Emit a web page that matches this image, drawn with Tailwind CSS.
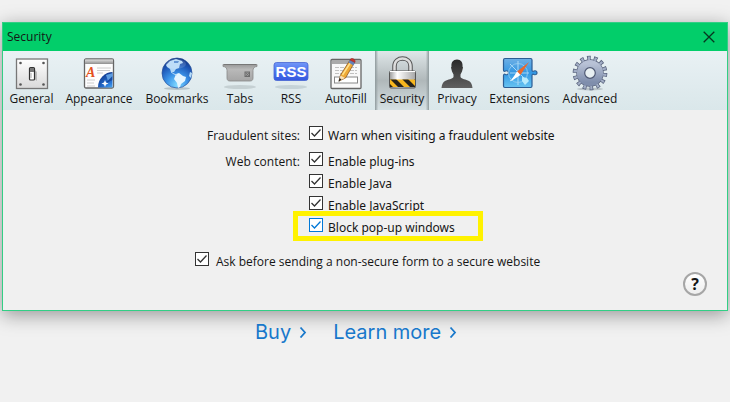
<!DOCTYPE html>
<html lang="en">
<head>
<meta charset="utf-8">
<meta name="viewport" content="width=device-width, initial-scale=1">
<title>Security</title>
<script src="https://cdn.jsdelivr.net/npm/@tailwindcss/browser@4"></script>
</head>
<body class="bg-white font-['Open_Sans','Noto_Sans',sans-serif] text-xs text-[#151515]">
<main class="bg-[#f1f1f1] px-[2px] pt-[22px] pb-14 overflow-hidden">
<section aria-label="Security preferences" class="border border-[#32cf85] bg-[#f0f0f0] shadow-[0_4px_18px_rgba(0,0,0,0.38)]">
  <header class="flex h-7 items-center justify-between bg-[#02ce6a] pl-1 pr-3 leading-4">
    <h1>Security</h1>
    <button aria-label="Close" class="size-3"><svg viewBox="0 0 12 12" class="size-3" fill="none" stroke="#07361f" stroke-width="1.3"><path d="M.7.7 11.3 11.3M11.3.7.7 11.3"/></svg></button>
  </header>
  <nav class="flex h-[59px] bg-linear-to-b from-[#e9f1f4] to-[#dae7ea] pl-px text-center">
    <button class="flex w-[55px] flex-col items-center pt-1">
      <svg class="size-9" viewBox="0 0 36 36"><defs><linearGradient id="plate" x2="0" y2="1"><stop stop-color="#fff"/><stop offset="1" stop-color="#d9d9d9"/></linearGradient></defs><rect x="2.5" y="4" width="31" height="29.5" fill="url(#plate)" stroke="#777" stroke-width="1.3"/><g fill="#555"><circle cx="6.5" cy="8" r="1.3"/><circle cx="29.5" cy="8" r="1.3"/><circle cx="6.5" cy="29.5" r="1.3"/><circle cx="29.5" cy="29.5" r="1.3"/></g><path d="m20 24 3 2v-9l-3-3z" fill="#bbb"/><rect x="15.500" y="12.500" width="5" height="12.500" rx="1" fill="#fff" stroke="#333" stroke-width="1.2"/><path d="M16 13h4v4h-4z" fill="#777"/><path d="M17 18v5" stroke="#aaa"/></svg>
      <span class="leading-4">General</span></button>
    <button class="flex w-20 flex-col items-center pt-1">
      <svg class="size-9" viewBox="0 0 36 36"><defs><radialGradient id="sea" cx=".5" cy=".7" r=".7"><stop stop-color="#6ed0ff"/><stop offset=".5" stop-color="#2877d8"/><stop offset="1" stop-color="#123b91"/></radialGradient><linearGradient id="bar" x2="0" y2="1"><stop stop-color="#ddd"/><stop offset="1" stop-color="#8e8e8e"/></linearGradient><clipPath id="win"><path d="M4 9h27.500v23.500H4z"/></clipPath></defs><rect x="3.500" y="4" width="29" height="29" rx="1.500" fill="#fdfdfd" stroke="#666" stroke-width="1.3"/><path d="M4 4.500h28V9H4z" fill="url(#bar)"/><text x="5" y="22" font-family="Liberation Serif, serif" font-size="14" font-style="italic" font-weight="700" fill="#e4511c">A</text><path d="M16 13h14M16 15.500h13M16 18h6M6 25h8M6 28h7M6 31h8" stroke="#ccc"/><g clip-path="url(#win)"><circle cx="32" cy="32" r="15" fill="url(#sea)"/><path d="m25 20 7-2v6l-5 2z" fill="#5d9ce0"/><path d="m31.500 21-8 8 8-4" fill="#164aa2"/><path d="m24 25 1 2.500 2.500 1-2.500 1-1 2.500-1-2.500-2.500-1 2.500-1z" fill="#fff"/></g></svg>
      <span class="leading-4">Appearance</span></button>
    <button class="flex w-[76px] flex-col items-center pt-1">
      <svg class="size-9" viewBox="0 0 36 36"><defs><radialGradient id="globe" cx=".5" cy=".9" r=".9"><stop stop-color="#7fd9ff"/><stop offset=".4" stop-color="#3b93e8"/><stop offset=".75" stop-color="#1d55b5"/><stop offset="1" stop-color="#12337f"/></radialGradient></defs><ellipse cx="18" cy="33.500" rx="13" ry="1.500" fill="#b7c4c9"/><circle cx="18" cy="18" r="15" fill="url(#globe)" stroke="#2a529a" stroke-width=".7"/><path d="m7 10 4-4 6-2 6 2 1 2-3 1-1 4-3 1-2 3-3 0-1-3-3-2z" fill="#b3d8f7"/><path d="m17 19 3-1 4 3 3 1-1 4-4 3-1 3-2 1-1-5-3-4z" fill="#e4f5ff"/><path d="m31 17 2 1-1 5-2-2z" fill="#b4dcf9"/><path d="M15 6h5l-1 2h-4z" fill="#4d86cf"/><path d="m12 17 3 2 3 1" fill="none" stroke="#b3d8f7"/><ellipse cx="17" cy="9" rx="10" ry="5" fill="#fff" opacity=".15"/></svg>
      <span class="leading-4">Bookmarks</span></button>
    <button class="flex w-[50px] flex-col items-center pt-1">
      <svg class="size-9" viewBox="0 0 36 36"><defs><linearGradient id="tab" x2="0" y2="1"><stop stop-color="#999"/><stop offset=".3" stop-color="#b9b9b9"/><stop offset="1" stop-color="#a5a5a5"/></linearGradient></defs><ellipse cx="18" cy="32" rx="16" ry="2" fill="#c5d0d3"/><path d="M1 9.500h34v2c-3 0-4 2-4 4V23c0 2-1 3-3 3H8c-2 0-3-1-3-3v-7.500c0-2-1-4-4-4z" fill="url(#tab)" stroke="#888" stroke-width=".8"/><path d="M2 9.500h32" stroke="#777"/><rect x="23" y="17" width="4.500" height="4.500" fill="#999" stroke="#6c6c6c"/><path d="m24 18 3 3m0-3-3 3" stroke="#666" stroke-width=".7"/></svg>
      <span class="leading-4">Tabs</span></button>
    <button class="flex w-[52px] flex-col items-center pt-1">
      <svg class="size-9" viewBox="0 0 36 36"><defs><linearGradient id="feed" x2="0" y2="1"><stop stop-color="#7197f7"/><stop offset=".5" stop-color="#4c73ee"/><stop offset="1" stop-color="#3457de"/></linearGradient></defs><ellipse cx="18" cy="32" rx="16" ry="2" fill="#c5d3d8"/><rect x="1" y="7.500" width="34" height="18" rx="2.500" fill="url(#feed)" stroke="#4665d2" stroke-width=".8"/><text x="18" y="22" text-anchor="middle" font-family="Liberation Sans, sans-serif" font-size="15" font-weight="700" fill="#fff">RSS</text></svg>
      <span class="leading-4">RSS</span></button>
    <button class="flex w-[58px] flex-col items-center pt-1">
      <svg class="size-9" viewBox="0 0 36 36"><rect x="3" y="4.500" width="30" height="29" rx="1" fill="#f8f8f8" stroke="#666" stroke-width="1.300"/><path d="M4 5h28v4H4z" fill="#aaa"/><path d="M7 12.500h22M7 15.500h8m7 0h7M7 18.500h8m7 0h7" stroke="#c1c1c1" stroke-dasharray="4 1"/><rect x="6.500" y="22" width="23" height="6" fill="#fff" stroke="#888"/><path d="m11 26 1.500-6L22 5l4.500 2.500-9 15.500z" fill="#eea936" stroke="#8a5724" stroke-width=".8"/><path d="m14.500 20 9-14" stroke="#ffe08a" stroke-width="1.500"/><path d="m20.500 7.500 1.500-3 5 3-1.500 3z" fill="#6581b9"/><path d="M22 5c1-3 6-1 5 2.500z" fill="#c9342d" stroke="#8c211d" stroke-width=".5"/><path d="m11 26 1.500-5.500 4.500 2.500z" fill="#f8dfb8"/><path d="m10.500 27 1-4 2 1.500z" fill="#222"/></svg>
      <span class="leading-4">AutoFill</span></button>
    <button aria-current="page" class="flex w-[54px] flex-col items-center bg-[linear-gradient(90deg,#8f9a9d,transparent_6%,transparent_94%,#8f9a9d),linear-gradient(#dfe7e9,#b0b8ba_50%,#d5e0e3)] pt-1">
      <svg class="size-9" viewBox="0 0 36 36"><defs><linearGradient id="steel"><stop stop-color="#999"/><stop offset=".3" stop-color="#fff"/><stop offset="1" stop-color="#a7a7a7"/></linearGradient><clipPath id="haz"><path d="M6 24.500h25v7.500H6z"/></clipPath></defs><path d="M10.500 18v-7c0-10 16-10 16 0v7" fill="none" stroke="#555" stroke-width="4.500"/><path d="M10.500 18v-7c0-10 16-10 16 0v7" fill="none" stroke="#ddd" stroke-width="2.500"/><rect x="5.500" y="16" width="26" height="17" rx="1.500" fill="url(#steel)" stroke="#555"/><g clip-path="url(#haz)"><path d="M6 24h25v8H6z" fill="#f8b61d"/><path d="m6 24 6 0 8 8h-6zm12 0h6l8 8h-6zM6 29v3h3zm24-5h6v6z" fill="#272219"/></g><path d="M6 16.500h25" stroke="#fff"/></svg>
      <span class="leading-4">Security</span></button>
    <button class="flex w-14 flex-col items-center pt-1">
      <svg class="size-9" viewBox="0 0 36 36"><defs><linearGradient id="person" x2="0" y2="1"><stop stop-color="#292929"/><stop offset="1" stop-color="#606060"/></linearGradient></defs><path d="M18 4.500c-4 0-6 3-5.500 7l-.5 1 1 4 1.500 3v2.500c-1 2-5.500 2.500-8.500 4-2 1-3 3-3.500 7h31c-.5-4-1.500-6-3.500-7-3-1.500-7.500-2-8.500-4v-2.500l1.500-3 1-4-.5-1c.5-4-1.500-7-5.500-7z" fill="url(#person)"/></svg>
      <span class="leading-4">Privacy</span></button>
    <button class="flex w-[69px] flex-col items-center pt-1">
      <svg class="size-9" viewBox="0 0 36 36"><defs><linearGradient id="piece" x2="0" y2="1"><stop stop-color="#6eafe5"/><stop offset=".5" stop-color="#3297e3"/><stop offset="1" stop-color="#68c4f2"/></linearGradient></defs><path d="M3 3.500h25.500c1 0 1.500.5 1.500 1.500v10c0 1.500 1 1.500 2 1 4-1.500 4 5 0 3.500-1-.5-2-.5-2 1V31c0 1-.5 1.500-1.500 1.500H3c-1 0-1.500-.5-1.500-1.500V20.500c0-1.500 1-1.500 2-1 4 1.500 4-5 0-3.500-1 .5-2 .5-2-1V5c0-1 .5-1.500 1.500-1.500z" fill="url(#piece)" stroke="#2c5d94" stroke-width="1.200"/><path d="M16 6v24M8 18h19M8 9l17 17M8 26 25 9" stroke="#c4e7fb" stroke-width=".8"/><circle cx="16" cy="18" r="9.500" fill="none" stroke="#9cd0f2" stroke-width=".8"/><path d="m20 22 5 1 2 3-4 4-3-4z" fill="#b8eafb"/><path d="M27 7 18.500 20 15 16.500z" fill="#e9682d"/><path d="m8.500 26.500 6.500-10 3.500 3.500z" fill="#fff"/></svg>
      <span class="leading-4">Extensions</span></button>
    <button class="flex w-[72px] flex-col items-center pt-1">
      <svg class="size-9" viewBox="0 0 36 36"><defs><linearGradient id="gear" x2="0" y2="1"><stop stop-color="#b8c2d6"/><stop offset="1" stop-color="#7f8eac"/></linearGradient></defs><ellipse cx="18" cy="34" rx="13" ry="1.500" fill="#b9c3c8"/><g fill="none"><circle cx="18" cy="18" r="15" stroke="#56607a" stroke-width="4.600" stroke-dasharray="3.600 3.132"/><circle cx="18" cy="18" r="9" stroke="#56607a" stroke-width="9.500"/><circle cx="18" cy="18" r="14.800" stroke="#a1adc5" stroke-width="3.600" stroke-dasharray="2.200 4.442" stroke-dashoffset="-.7"/><circle cx="18" cy="18" r="9.200" stroke="url(#gear)" stroke-width="7.800"/></g><circle cx="18" cy="18" r="5.300" fill="#e8f0f2" stroke="#515b75" stroke-width="1.200"/></svg>
      <span class="leading-4">Advanced</span></button>
  </nav>
  <form class="flex flex-col pt-3 pb-[14px]">
    <div class="grid grid-cols-[297px_1fr] gap-x-[9px] font-['Noto_Sans',sans-serif]">
      <p class="pt-1 text-right font-['Open_Sans',sans-serif] leading-5">Fraudulent sites:</p>
      <label class="flex h-[26px] items-start gap-[5px]"><span class="relative mt-1 block size-[14px]"><input type="checkbox" checked class="block size-[14px] appearance-none border border-[#333] bg-white"><svg class="pointer-events-none absolute inset-0 size-[14px]" viewBox="0 0 14 14" fill="none" stroke="#333" stroke-width="1.300"><path d="m2.500 7 3 3L11.500 3.500"/></svg></span><span class="pt-1 leading-5">Warn when visiting a fraudulent website</span></label>
      <p class="pt-1 text-right font-['Open_Sans',sans-serif] leading-5">Web content:</p>
      <div class="flex flex-col items-start">
        <label class="flex h-[22px] items-start gap-[5px]"><span class="relative mt-1 block size-[14px]"><input type="checkbox" checked class="block size-[14px] appearance-none border border-[#333] bg-white"><svg class="pointer-events-none absolute inset-0 size-[14px]" viewBox="0 0 14 14" fill="none" stroke="#333" stroke-width="1.300"><path d="m2.500 7 3 3L11.500 3.500"/></svg></span><span class="pt-1 leading-5">Enable plug-ins</span></label>
        <label class="flex h-[22px] items-start gap-[5px]"><span class="relative mt-1 block size-[14px]"><input type="checkbox" checked class="block size-[14px] appearance-none border border-[#333] bg-white"><svg class="pointer-events-none absolute inset-0 size-[14px]" viewBox="0 0 14 14" fill="none" stroke="#333" stroke-width="1.300"><path d="m2.500 7 3 3L11.500 3.500"/></svg></span><span class="pt-1 leading-5">Enable Java</span></label>
        <label class="flex h-[22px] items-start gap-[5px]"><span class="relative mt-1 block size-[14px]"><input type="checkbox" checked class="block size-[14px] appearance-none border border-[#333] bg-white"><svg class="pointer-events-none absolute inset-0 size-[14px]" viewBox="0 0 14 14" fill="none" stroke="#333" stroke-width="1.300"><path d="m2.500 7 3 3L11.500 3.500"/></svg></span><span class="pt-1 leading-5">Enable JavaScript</span></label>
        <label class="relative flex h-[22px] items-start gap-[5px]"><span class="relative mt-1 block size-[14px]"><input type="checkbox" checked class="block size-[14px] appearance-none border border-[#0078d7] bg-white"><svg class="pointer-events-none absolute inset-0 size-[14px]" viewBox="0 0 14 14" fill="none" stroke="#0078d7" stroke-width="1.300"><path d="m2.500 7 3 3L11.500 3.500"/></svg></span><span class="pt-1 leading-5">Block pop-up windows</span><span class="pointer-events-none absolute -left-4 -right-7 -top-[3px] h-[30px] border-5 border-[#fff200]"></span></label>
      </div>
    </div>
    <label class="mt-3 ml-48 flex items-start gap-[7px]"><span class="relative mt-1 block size-[14px]"><input type="checkbox" checked class="block size-[14px] appearance-none border border-[#333] bg-white"><svg class="pointer-events-none absolute inset-0 size-[14px]" viewBox="0 0 14 14" fill="none" stroke="#333" stroke-width="1.300"><path d="m2.500 7 3 3L11.500 3.500"/></svg></span><span class="pt-1 leading-5">Ask before sending a non-secure form to a secure website</span></label>
    <button type="button" aria-label="Help" class="mr-5 size-6 self-end rounded-full border-2 border-[#a6a6a6] bg-linear-to-b from-white to-[#eee] text-base leading-5 font-bold">?</button>
  </form>
</section>
<footer class="mt-[7px] flex gap-[26px] pl-[253px] font-[Inter,sans-serif] text-xl leading-7 text-[#1878cb]">
  <a href="#buy" class="flex items-center gap-2">Buy <svg class="h-3 w-2" viewBox="0 0 8 12" fill="none" stroke="currentColor" stroke-width="1.800"><path d="m1.500 1.500 4.500 5-4.500 5"/></svg></a>
  <a href="#learn" class="flex items-center gap-2">Learn more <svg class="h-3 w-2" viewBox="0 0 8 12" fill="none" stroke="currentColor" stroke-width="1.800"><path d="m1.500 1.500 4.500 5-4.500 5"/></svg></a>
</footer>
</main>
</body>
</html>
